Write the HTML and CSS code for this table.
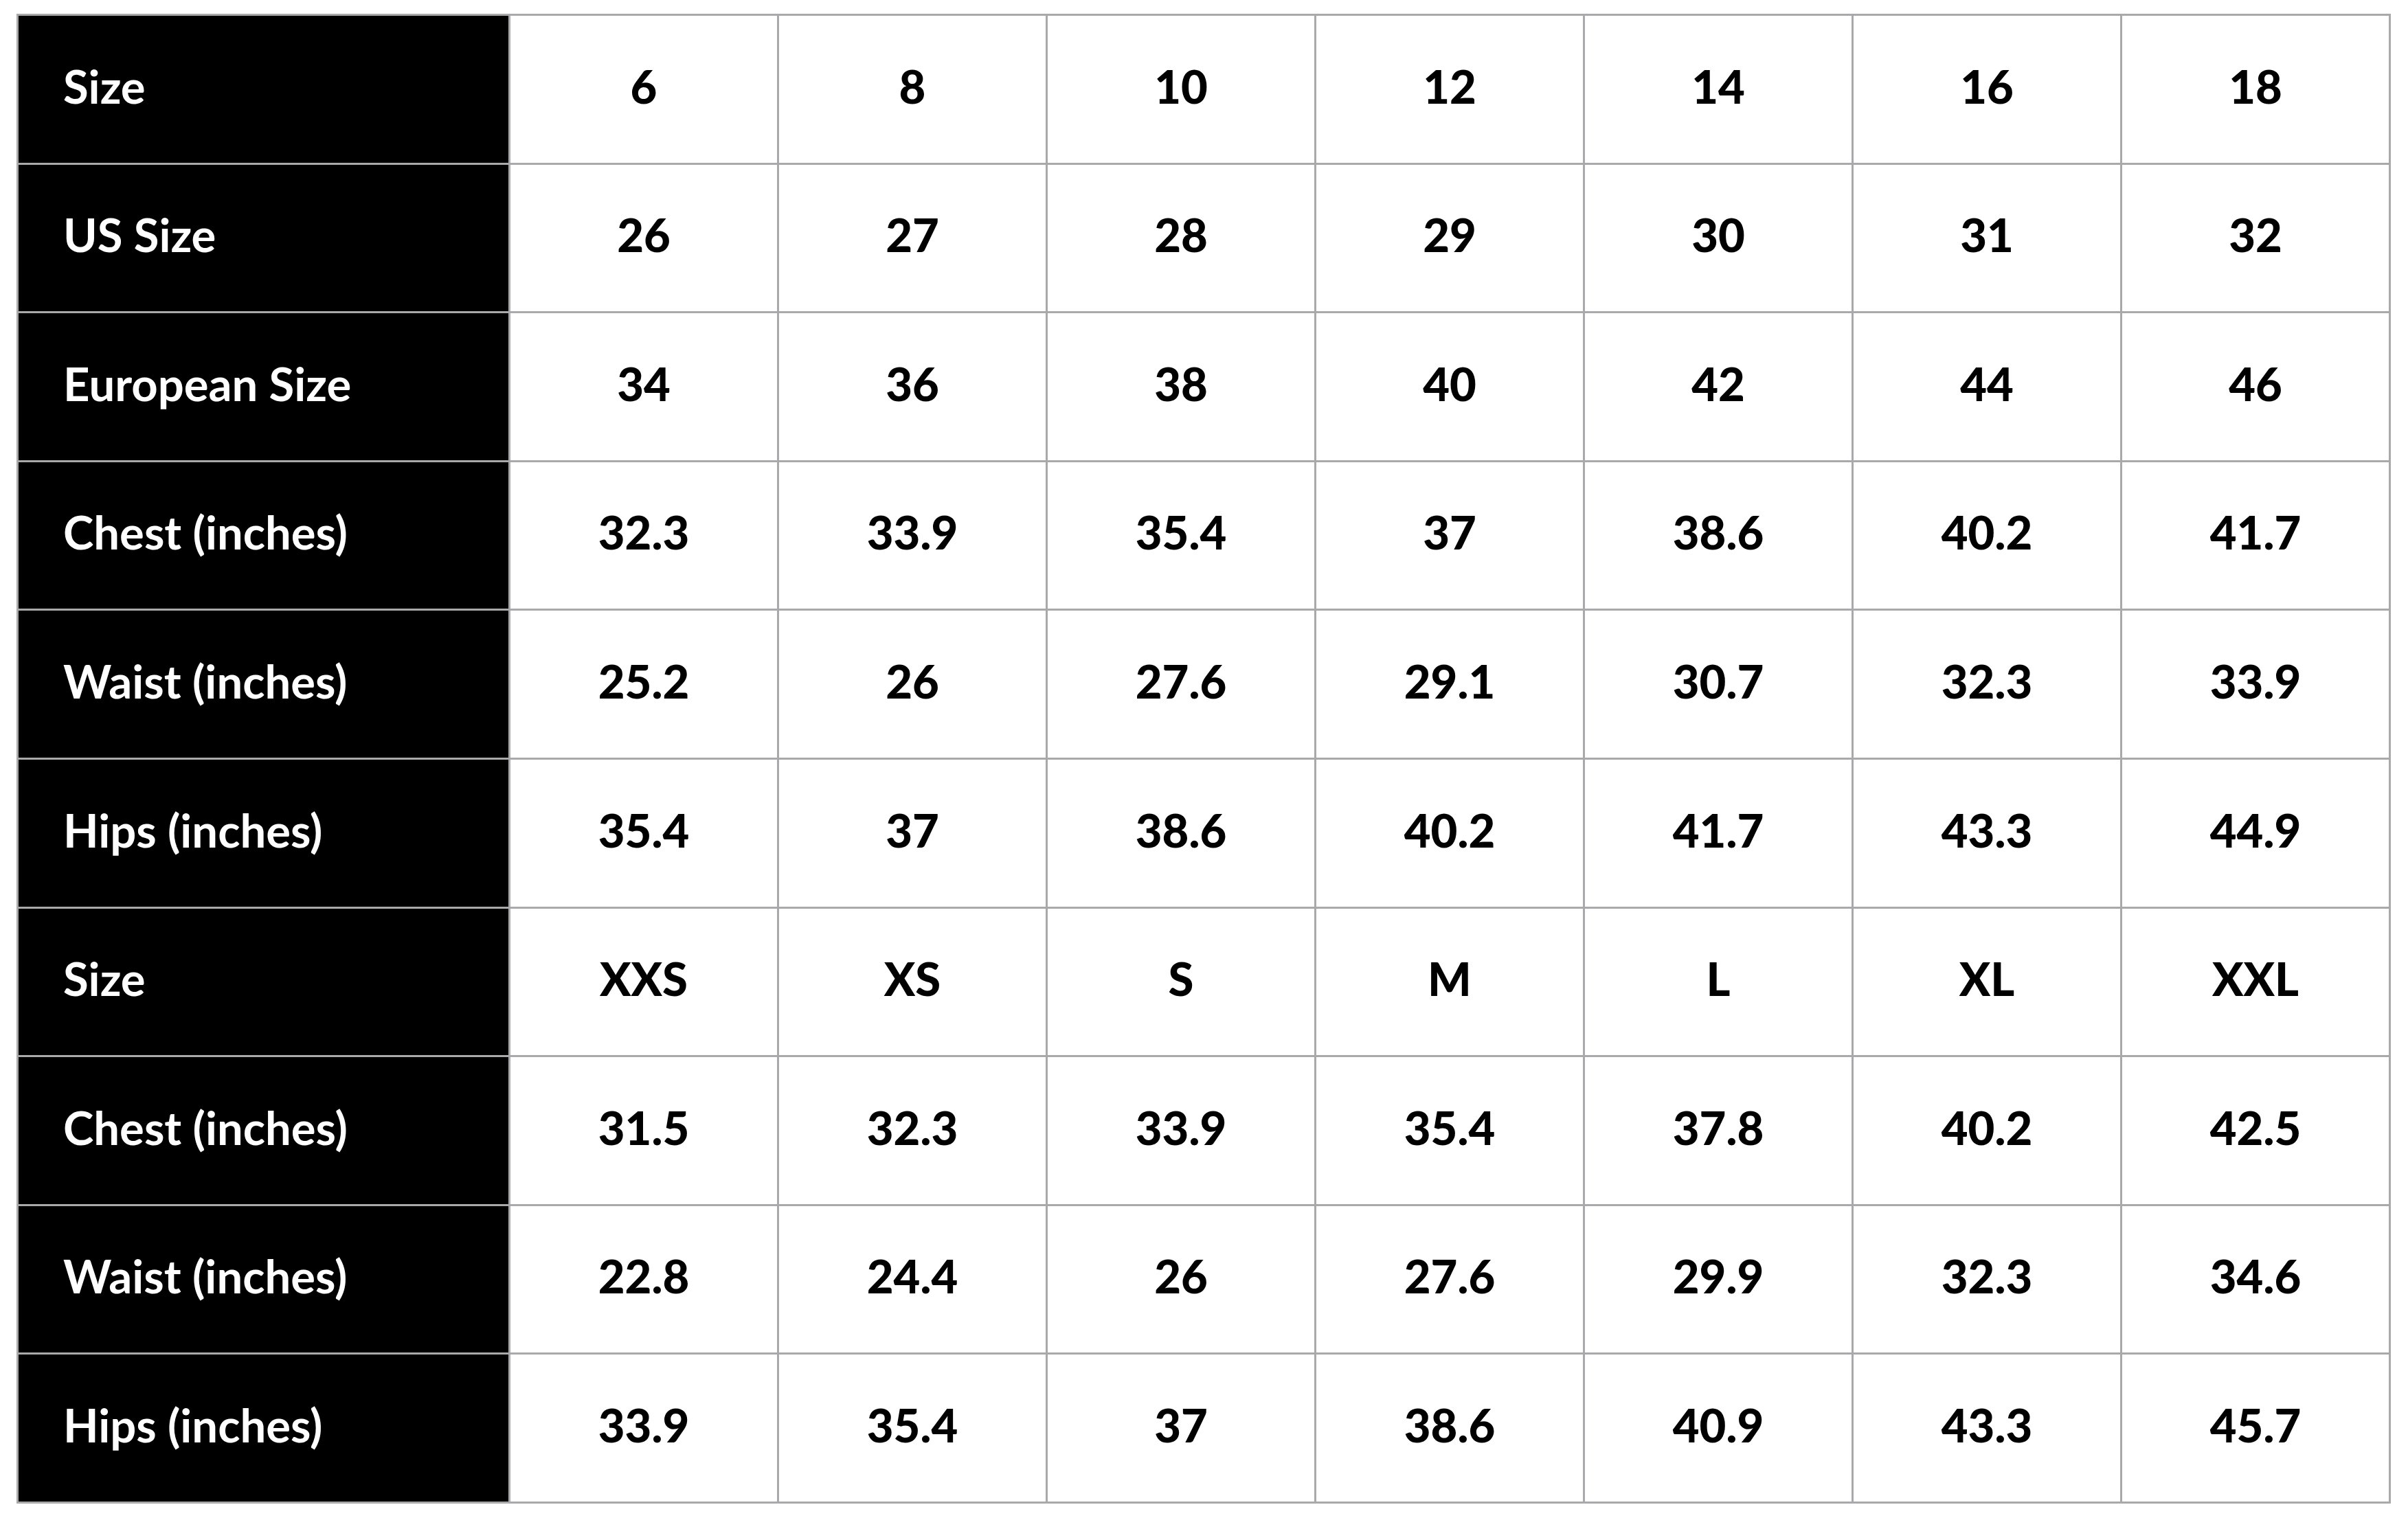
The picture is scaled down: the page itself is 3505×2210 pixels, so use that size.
FILE: index.html
```html
<!DOCTYPE html>
<html lang="en">
<head>
<meta charset="utf-8">
<title>Size Chart</title>
<link rel="stylesheet" href="styles.css">
</head>
<body>
<div class="chart">
  <div class="label">Size</div><div class="val">6</div><div class="val">8</div><div class="val">10</div><div class="val">12</div><div class="val">14</div><div class="val">16</div><div class="val">18</div>
  <div class="label">US Size</div><div class="val">26</div><div class="val">27</div><div class="val">28</div><div class="val">29</div><div class="val">30</div><div class="val">31</div><div class="val">32</div>
  <div class="label">European Size</div><div class="val">34</div><div class="val">36</div><div class="val">38</div><div class="val">40</div><div class="val">42</div><div class="val">44</div><div class="val">46</div>
  <div class="label">Chest (inches)</div><div class="val">32.3</div><div class="val">33.9</div><div class="val">35.4</div><div class="val">37</div><div class="val">38.6</div><div class="val">40.2</div><div class="val">41.7</div>
  <div class="label">Waist (inches)</div><div class="val">25.2</div><div class="val">26</div><div class="val">27.6</div><div class="val">29.1</div><div class="val">30.7</div><div class="val">32.3</div><div class="val">33.9</div>
  <div class="label">Hips (inches)</div><div class="val">35.4</div><div class="val">37</div><div class="val">38.6</div><div class="val">40.2</div><div class="val">41.7</div><div class="val">43.3</div><div class="val">44.9</div>
  <div class="label">Size</div><div class="val">XXS</div><div class="val">XS</div><div class="val">S</div><div class="val">M</div><div class="val">L</div><div class="val">XL</div><div class="val">XXL</div>
  <div class="label">Chest (inches)</div><div class="val">31.5</div><div class="val">32.3</div><div class="val">33.9</div><div class="val">35.4</div><div class="val">37.8</div><div class="val">40.2</div><div class="val">42.5</div>
  <div class="label">Waist (inches)</div><div class="val">22.8</div><div class="val">24.4</div><div class="val">26</div><div class="val">27.6</div><div class="val">29.9</div><div class="val">32.3</div><div class="val">34.6</div>
  <div class="label">Hips (inches)</div><div class="val">33.9</div><div class="val">35.4</div><div class="val">37</div><div class="val">38.6</div><div class="val">40.9</div><div class="val">43.3</div><div class="val">45.7</div>
</div>
</body>
</html>
```

FILE: styles.css
```css
html, body {
  margin: 0;
  padding: 0;
  background: #ffffff;
}

body {
  padding: 20px 0 0 24px;
  font-family: Lato, "Liberation Sans", sans-serif;
  font-weight: 700;
}

.chart {
  width: 3456px;
  height: 2169px;
  box-sizing: border-box;
  display: grid;
  grid-template-columns: 713px repeat(7, 1fr);
  grid-template-rows: repeat(10, 1fr);
  gap: 3px;
  padding: 3px;
  background: #a9a9ab;
}

.label,
.val {
  display: flex;
  align-items: center;
  font-size: 67px;
  line-height: 1.2;
  padding-bottom: 10px;
  box-sizing: border-box;
}

.label {
  background: #000000;
  color: #ffffff;
  padding-left: 65px;
}

.val {
  background: #ffffff;
  color: #000000;
  justify-content: center;
  font-weight: 900;
}
```
